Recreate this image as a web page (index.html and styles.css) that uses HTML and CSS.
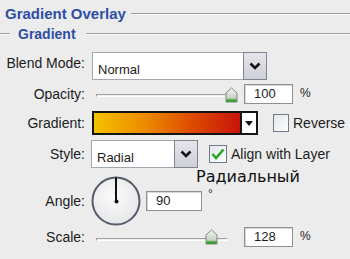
FILE: index.html
```html
<!DOCTYPE html>
<html lang="en">
<head>
    <meta charset="UTF-8">
    <title>Gradient Overlay</title>
    <link rel="stylesheet" href="styles.css">
</head>
<body>
    <div class="panel">
        <div class="legend legend-main"><span>Gradient Overlay</span></div>
        <div class="legend legend-sub"><span>Gradient</span></div>

        <div class="row row-blend">
            <label>Blend Mode:</label>
            <div class="select select-wide">
                <span class="select-value">Normal</span>
                <span class="select-btn">
                    <svg width="12" height="8" viewBox="0 0 12 8"><polyline points="1.5,1.5 6,6 10.5,1.5" fill="none" stroke="#111" stroke-width="2.6"/></svg>
                </span>
            </div>
        </div>

        <div class="row row-opacity">
            <label>Opacity:</label>
            <div class="slider">
                <div class="track"></div>
                <svg class="thumb thumb-opacity" width="13" height="16" viewBox="0 0 13 16">
                    <defs><linearGradient id="tg1" x1="0" y1="0" x2="0" y2="1"><stop offset="0" stop-color="#f4f6f2"/><stop offset="0.7" stop-color="#c9d3c6"/><stop offset="1" stop-color="#3d9a3a"/></linearGradient></defs>
                    <path d="M1 6 L6.5 1 L12 6 L12 15 L1 15 Z" fill="url(#tg1)" stroke="#7d8a7b" stroke-width="1"/>
                    <rect x="1.5" y="12.5" width="10" height="2.5" fill="#3f9d3b"/>
                </svg>
            </div>
            <div class="num num-pct">100</div>
            <span class="unit">%</span>
        </div>

        <div class="row row-gradient">
            <label>Gradient:</label>
            <div class="grad-pick">
                <div class="grad-bar"></div>
                <div class="grad-drop">
                    <svg width="8" height="5" viewBox="0 0 8 5"><path d="M0 0 L8 0 L4 5 Z" fill="#111"/></svg>
                </div>
            </div>
            <span class="check"></span>
            <span class="check-label">Reverse</span>
        </div>

        <div class="row row-style">
            <label>Style:</label>
            <div class="select select-small">
                <span class="select-value">Radial</span>
                <span class="select-btn">
                    <svg width="12" height="8" viewBox="0 0 12 8"><polyline points="1.5,1.5 6,6 10.5,1.5" fill="none" stroke="#111" stroke-width="2.6"/></svg>
                </span>
            </div>
            <span class="check check-on">
                <svg width="14" height="12" viewBox="0 0 14 12"><polyline points="1.5,6 5,10 12.5,1.5" fill="none" stroke="#2aa52a" stroke-width="2.6"/></svg>
            </span>
            <span class="check-label">Align with Layer</span>
        </div>

        <div class="caption">Радиальный</div>

        <div class="row row-angle">
            <label>Angle:</label>
            <svg class="dial" width="50" height="50" viewBox="0 0 50 50">
                <defs><radialGradient id="dg" cx="0.45" cy="0.4" r="0.7"><stop offset="0" stop-color="#fbfbfb"/><stop offset="1" stop-color="#e2e3e6"/></radialGradient></defs>
                <circle cx="25" cy="25" r="23.5" fill="url(#dg)" stroke="#565c6b" stroke-width="2"/>
                <line x1="25" y1="1.5" x2="25" y2="25" stroke="#111" stroke-width="2"/>
                <circle cx="25.5" cy="25.5" r="2" fill="#111"/>
            </svg>
            <div class="num num-angle">90</div>
            <span class="unit unit-deg">°</span>
        </div>

        <div class="row row-scale">
            <label>Scale:</label>
            <div class="slider">
                <div class="track"></div>
                <svg class="thumb thumb-scale" width="13" height="16" viewBox="0 0 13 16">
                    <defs><linearGradient id="tg2" x1="0" y1="0" x2="0" y2="1"><stop offset="0" stop-color="#f4f6f2"/><stop offset="0.7" stop-color="#c9d3c6"/><stop offset="1" stop-color="#3d9a3a"/></linearGradient></defs>
                    <path d="M1 6 L6.5 1 L12 6 L12 15 L1 15 Z" fill="url(#tg2)" stroke="#7d8a7b" stroke-width="1"/>
                    <rect x="1.5" y="12.5" width="10" height="2.5" fill="#3f9d3b"/>
                </svg>
            </div>
            <div class="num num-pct">128</div>
            <span class="unit">%</span>
        </div>
    </div>
</body>
</html>
```

FILE: styles.css
```css
body {
    margin: 0;
    background: #ececec;
    font-family: 'Liberation Sans', Arial, sans-serif;
    font-size: 14px;
    color: #1c1c1c;
}
.panel {
    position: relative;
    width: 350px;
    height: 259px;
    overflow: hidden;
}
.legend {
    display: flex;
    align-items: center;
    font-weight: bold;
    color: #2c4fa3;
}
.legend::after {
    content: '';
    flex: 1;
    height: 0;
    border-top: 1px solid #9c9c9c;
    border-bottom: 1px solid #fbfbfb;
}
.legend-main {
    margin-top: 5px;
    height: 18px;
    line-height: 18px;
    padding-left: 5px;
    font-size: 15px;
}
.legend-main::after {
    margin-left: 5px;
}
.legend-sub {
    margin-top: 3px;
    height: 16px;
    line-height: 16px;
    font-size: 14px;
}
.legend-sub::before {
    content: '';
    width: 10px;
    border-top: 1px solid #9c9c9c;
    border-bottom: 1px solid #fbfbfb;
    margin-right: 8px;
}
.legend-sub::after {
    margin-left: 10px;
}
.row {
    display: flex;
    align-items: center;
}
.row label {
    flex: 0 0 85px;
    text-align: right;
    margin-right: 7px;
    line-height: 16px;
}
.row-blend {
    margin-top: 10px;
    height: 28px;
}
.row-blend label {
    margin-top: -6px;
}
.row-opacity {
    margin-top: 4px;
    height: 20px;
}
.row-gradient {
    margin-top: 7px;
    height: 24px;
}
.row-style {
    margin-top: 5px;
    height: 28px;
}
.row-style label {
    margin-right: 6px;
}
.row-angle {
    margin-top: 8px;
    height: 50px;
}
.row-angle label {
    margin-right: 6px;
}
.row-scale {
    margin-top: 1px;
    height: 20px;
}

/* selects */
.select {
    display: flex;
    height: 28px;
    box-sizing: border-box;
    background: #fff;
    border: 1px solid #a3a8b0;
}
.select-wide {
    width: 175px;
}
.select-small {
    width: 107px;
}
.select-value {
    flex: 1;
    padding: 9px 0 0 5px;
    font-size: 13px;
    line-height: 15px;
}
.select-btn {
    width: 22px;
    margin: -1px -1px -1px 0;
    display: flex;
    align-items: center;
    justify-content: center;
    background: linear-gradient(#e4e4ea, #cfd0d8);
    border: 1px solid #7f8590;
}

/* sliders */
.slider {
    position: relative;
    width: 148px;
    height: 20px;
    margin-right: 4px;
}
.track {
    margin: 10px 12px 0 4px;
    height: 1px;
    border-top: 1px solid #a2a2a2;
    border-bottom: 1px solid #fff;
    border-left: 1px solid #9a9a9a;
}
.thumb {
    position: absolute;
    top: 3px;
}
.thumb-opacity {
    left: 133px;
}
.thumb-scale {
    left: 113px;
}
.row-scale .track {
    margin-right: 13px;
    margin-top: 11px;
}
.row-scale .thumb {
    top: 2px;
}

.num {
    box-sizing: border-box;
    height: 20px;
    background: #fff;
    border: 1px solid #8f8f8f;
    box-shadow: inset 1px 1px 0 #d8d8d8;
    font-size: 13px;
    line-height: 18px;
    padding-left: 9px;
}
.num-pct {
    width: 49px;
}
.num-angle {
    width: 56px;
    margin-left: 5px;
}
.unit {
    align-self: flex-start;
    margin-left: 7px;
    font-size: 12px;
    line-height: 14px;
    margin-top: 2px;
}
.unit-deg {
    margin-top: 11px;
    margin-left: 6px;
}

/* gradient picker */
.grad-pick {
    display: flex;
    height: 24px;
    box-sizing: border-box;
    border: 2px solid #141414;
}
.grad-bar {
    width: 146px;
    background: linear-gradient(to right, #f6c100, #ec8a00 35%, #de4f00 65%, #c8140c);
    border-right: 2px solid #141414;
}
.grad-drop {
    width: 14px;
    background: #fff;
    display: flex;
    align-items: center;
    justify-content: center;
}
.check {
    display: flex;
    align-items: center;
    justify-content: center;
    width: 16px;
    height: 18px;
    box-sizing: border-box;
    border: 1px solid #6f7a8c;
    background: linear-gradient(135deg, #e3e6ea, #fdfdfd);
    margin-left: 15px;
}
.check-label {
    margin-left: 4px;
    font-size: 14px;
}
.row-style .check {
    width: 18px;
    margin-left: 11px;
}
.caption {
    position: absolute;
    left: 196px;
    top: 167px;
    font-family: 'DejaVu Sans', sans-serif;
    font-size: 16px;
    line-height: 19px;
    color: #111;
}
```
